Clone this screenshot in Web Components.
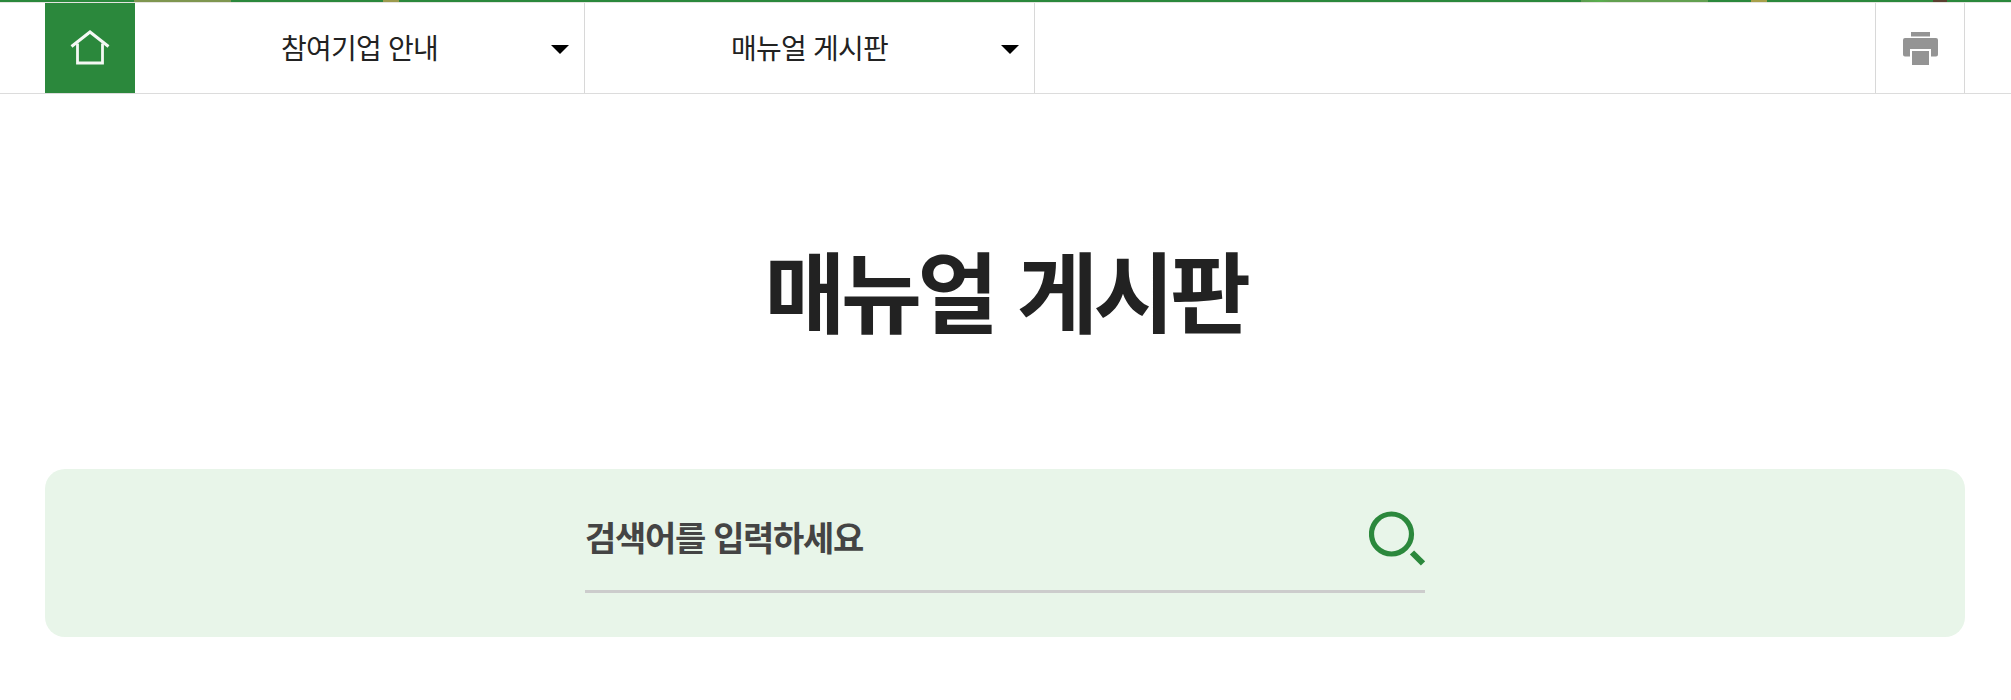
<!DOCTYPE html>
<html lang="ko"><head><meta charset="utf-8"><title>매뉴얼 게시판</title>
<style>
html,body{margin:0;padding:0;background:#fff;font-family:"Noto Sans CJK KR","Noto Sans",sans-serif;}
</style></head><body>
<site-header>
  <nav-select>참여기업 안내</nav-select>
  <nav-select>매뉴얼 게시판</nav-select>
</site-header>
<page-title>매뉴얼 게시판</page-title>
<search-panel placeholder="검색어를 입력하세요"></search-panel>
<script>
function def(name,html,init){
  customElements.define(name,class extends HTMLElement{
    constructor(){super();const r=this.attachShadow({mode:'open'});r.innerHTML=html;}
    connectedCallback(){if(init)init(this);}
  });
}
def('site-header',`<style>
:host{display:block}
.strip{height:2px;background:linear-gradient(90deg,#2b883c 0,#2b883c 134px,#7f9650 134px,#7f9650 231px,#2b883c 231px,#2b883c 383px,#9c9a4c 383px,#9c9a4c 399px,#2b883c 399px,#2b883c 1581px,#5e9c50 1581px,#58b04e 1600px,#62a050 1610px,#62a050 1708px,#2b883c 1708px,#2b883c 1751px,#a8a04a 1751px,#a8a04a 1767px,#2b883c 1767px,#2b883c 1933px,#5a4030 1933px,#5a4030 1947px,#2b883c 1947px)}
.gap{height:1px;background:#e4e4e0}
.bar{display:flex;height:90px;padding:0 46px 0 45px;border-bottom:1px solid #dcdcdc}
.home{flex:none;width:90px;background:#2b883c;display:flex;align-items:center;justify-content:center}
.sp{flex:1}
.print{flex:none;width:88px;border:solid #d8d8d8;border-width:0 1px;display:flex;align-items:center;justify-content:center;box-sizing:content-box}
svg{display:block}
</style>
<div class="strip"></div><div class="gap"></div>
<div class="bar">
<div class="home"><svg width="40" height="36" viewBox="0 0 40 36" fill="none" stroke="#f4f8f4"><path d="M1.500 16.500 20 2 38.500 16.500" stroke-width="3"/><path d="M7.500 13.500V33H32.500V13.500" stroke-width="2.800"/></svg></div>
<slot></slot>
<div class="sp"></div>
<div class="print"><svg width="35" height="33" viewBox="0 0 35 33"><path fill="#949494" d="M8 0H27V4.500H8Z"/><path fill="#949494" d="M2 6H33a2 2 0 0 1 2 2V22.500a2 2 0 0 1-2 2H28V17H7V24.500H2a2 2 0 0 1-2-2V8a2 2 0 0 1 2-2Z"/><path fill="#949494" d="M9 19H26V33H9Z"/></svg></div>
</div>`);
def('nav-select',`<style>
:host{display:flex;flex:none;width:449px;border-right:1px solid #d8d8d8;position:relative;align-items:center;justify-content:center;font-size:28px;letter-spacing:-.8px;color:#222}
.t{position:relative;top:-1px}
.a{position:absolute;right:15px;top:42px;width:0;height:0;border:solid transparent;border-width:9px 9px 0;border-top-color:#000}
</style><span class="t"><slot></slot></span><i class="a"></i>`);
def('page-title',`<style>
:host{display:block;padding:139px 0 0;height:236px;text-align:center}
h1{margin:0;font-size:88px;line-height:110px;font-weight:700;letter-spacing:-4.500px;word-spacing:3px;color:#222}
</style><h1><slot></slot></h1>`);
def('search-panel',`<style>
:host{display:block;margin:0 46px 0 45px;height:168px;border-radius:20px;background:#e8f5e9;position:relative}
.f{position:absolute;left:540px;width:840px;top:0;height:121px;border-bottom:3px solid #ccc;display:flex;align-items:center;justify-content:space-between;box-sizing:content-box}
.t{font-size:34px;font-weight:700;letter-spacing:-1.300px;color:#444;position:relative;top:7px}
svg{display:block;position:relative;top:9.500px}
</style><div class="f"><span class="t"></span><svg width="56" height="56" viewBox="0 0 56 56" fill="none" stroke="#2b883c"><circle cx="22.500" cy="23" r="20" stroke-width="5.200"/><path d="M43 41.500 54 52.500" stroke-width="6"/></svg></div>`,
el=>{el.shadowRoot.querySelector('.t').textContent=el.getAttribute('placeholder')});
</script>
</body></html>
